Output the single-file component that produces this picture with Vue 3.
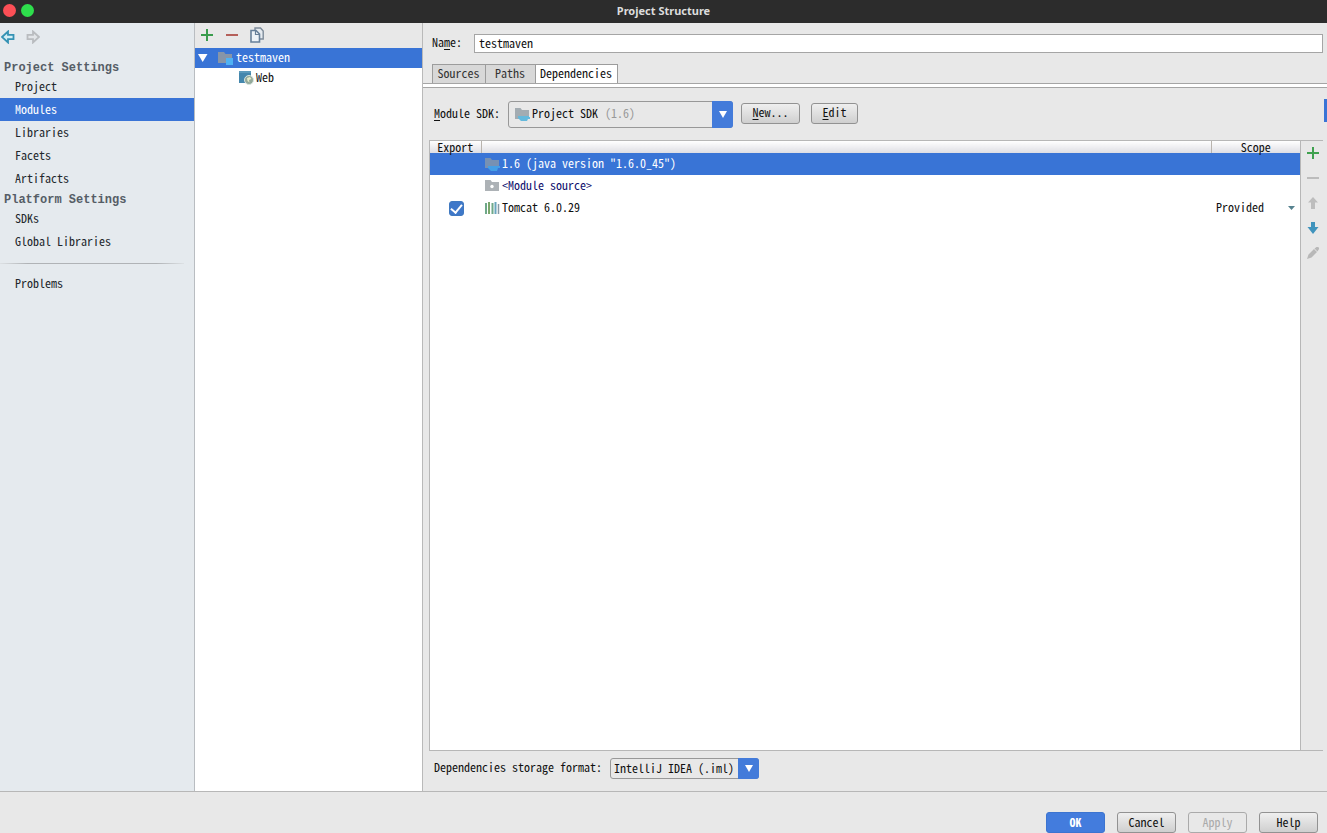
<script setup>
import { ref } from 'vue'

const projectItems = ['Project', 'Modules', 'Libraries', 'Facets', 'Artifacts']
const platformItems = ['SDKs', 'Global Libraries']
const current = ref('Modules')
const moduleName = ref('testmaven')
const exported = ref(true)
</script>

<template>
  <div class="window">
    <header class="titlebar">
      <div class="lights">
        <button class="light red" aria-label="Close"></button>
        <button class="light green" aria-label="Maximize"></button>
      </div>
      <h1>Project Structure</h1>
    </header>

    <div class="body">
      <nav class="sidebar">
        <div class="history">
          <button class="icon-btn" aria-label="Back">
            <svg width="14" height="14" viewBox="0 0 14 14"><path d="M1 7 7 1.500V4.800H12.500V9.200H7V12.500Z" fill="#d3eef5" stroke="#3492b4" stroke-width="1.800" /></svg>
          </button>
          <button class="icon-btn" aria-label="Forward">
            <svg width="14" height="14" viewBox="0 0 14 14"><path d="M13 7 7 1.500V4.800H1.500V9.200H7V12.500Z" fill="#e2e5e8" stroke="#b9bcbf" stroke-width="1.800" /></svg>
          </button>
        </div>
        <h2>Project Settings</h2>
        <a v-for="item in projectItems" :key="item" href="#" class="nav-item" :class="{ active: item === current }" @click.prevent="current = item">{{ item }}</a>
        <h2>Platform Settings</h2>
        <a v-for="item in platformItems" :key="item" href="#" class="nav-item" :class="{ active: item === current }" @click.prevent="current = item">{{ item }}</a>
        <hr />
        <a href="#" class="nav-item" @click.prevent>Problems</a>
      </nav>

      <section class="tree">
        <div class="tree-tools">
          <button class="icon-btn" aria-label="Add">
            <svg width="14" height="14" viewBox="0 0 14 14"><path d="M7 1V13M1 7H13" stroke="#3a9c4c" stroke-width="2" /></svg>
          </button>
          <button class="icon-btn" aria-label="Remove">
            <svg width="14" height="14" viewBox="0 0 14 14"><path d="M1 7H13" stroke="#b5605a" stroke-width="2" /></svg>
          </button>
          <button class="icon-btn" aria-label="Copy">
            <svg width="14" height="16" viewBox="0 0 14 16">
              <path d="M5 3V1H10.500L13.200 4V12H10" fill="#e6ebf0" stroke="#7d8b99" stroke-width="1.400" />
              <path d="M1 3.500H6L9.500 7V15H1Z" fill="#edf3f8" stroke="#67809a" stroke-width="1.600" />
              <path d="M5.500 3.500V7.500H9.500" fill="none" stroke="#67809a" stroke-width="1.200" />
            </svg>
          </button>
        </div>
        <div class="tree-row root">
          <svg class="twisty" width="10" height="8" viewBox="0 0 10 8"><path d="M0 0H9.500L4.700 8Z" fill="#fff" /></svg>
          <svg width="16" height="14" viewBox="0 0 16 14">
            <path d="M0 1H6L7.500 3H14V12H0Z" fill="#8795a8" />
            <path d="M8 7H15V14H8Z" fill="#4fb2f4" />
          </svg>
          <span>testmaven</span>
        </div>
        <div class="tree-row child">
          <svg width="15" height="14" viewBox="0 0 15 14">
            <path d="M0 0H12V12H0Z" fill="#4487ad" />
            <path d="M0 0H12V2H0Z" fill="#5b9abb" />
            <circle cx="10" cy="9" r="4.500" fill="#93a99b" stroke="#d9e5df" />
            <path d="M8 7 11 6 12.500 8 10 9 10.500 11.500 8.500 10Z" fill="#e5ecc9" />
          </svg>
          <span>Web</span>
        </div>
      </section>

      <main class="detail">
        <div class="name-row">
          <label for="module-name">Na<u>m</u>e:</label>
          <input id="module-name" v-model="moduleName" type="text" />
        </div>

        <div class="tabs" role="tablist">
          <button role="tab" class="tab sources">Sources</button>
          <button role="tab" class="tab paths">Paths</button>
          <button role="tab" class="tab selected" aria-selected="true">Dependencies</button>
        </div>
        <div class="tab-rule"></div>

        <div class="sdk-row">
          <label for="sdk"><u>M</u>odule SDK:</label>
          <div class="combo sdk">
            <select id="sdk"><option>Project SDK</option></select>
            <span class="sdk-face">
              <svg width="16" height="15" viewBox="0 0 16 15">
                <path d="M0 1H5.500L7 3H14V12H0Z" fill="#a3acb2" />
                <path d="M3 9H14V10H15V12H13L12 14H6L3 11Z" fill="#65b9dc" />
              </svg>
              <span class="version">(1.6)</span>
            </span>
            <span class="arrow"><svg width="8" height="7" viewBox="0 0 8 7"><path d="M0 0H8L4 7Z" fill="#fff" /></svg></span>
          </div>
          <button class="btn new"><span><u>N</u>ew...</span></button>
          <button class="btn edit"><span><u>E</u>dit</span></button>
        </div>

        <div class="deps">
          <div class="table-wrap">
            <table>
              <colgroup><col class="c-export" /><col /><col class="c-scope" /></colgroup>
              <thead>
                <tr><th scope="col">Export</th><th scope="col" aria-label="Dependency"></th><th scope="col">Scope</th></tr>
              </thead>
              <tbody>
                <tr class="picked">
                  <td></td>
                  <td>
                    <div class="dep">
                      <svg width="15" height="14" viewBox="0 0 15 14">
                        <path d="M0 1H5.500L7 3H14V11H0Z" fill="#7791b3" />
                        <path d="M3 9H15V11H13L12 14H6L3 11Z" fill="#459fe5" />
                      </svg>
                      <span>1.6 (java version "1.6.0_45")</span>
                    </div>
                  </td>
                  <td></td>
                </tr>
                <tr>
                  <td></td>
                  <td>
                    <div class="dep link">
                      <svg width="15" height="14" viewBox="0 0 15 14">
                        <path d="M0 1H5.500L7 3H14V12H0Z" fill="#adb2b6" />
                        <circle cx="7" cy="7.500" r="1.700" fill="#fff" />
                      </svg>
                      <span>&lt;Module source&gt;</span>
                    </div>
                  </td>
                  <td></td>
                </tr>
                <tr>
                  <td class="check"><input v-model="exported" type="checkbox" aria-label="Export Tomcat 6.0.29" /></td>
                  <td>
                    <div class="dep">
                      <svg width="15" height="14" viewBox="0 0 15 14">
                        <path d="M1 2V13M7.500 2V13" stroke="#6fa889" stroke-width="2" />
                        <path d="M4 1V13" stroke="#7aa76c" stroke-width="2" />
                        <path d="M10.500 1V13" stroke="#69a5bd" stroke-width="2" />
                        <path d="M13.500 3V13" stroke="#8799a5" stroke-width="1.500" />
                      </svg>
                      <span>Tomcat 6.0.29</span>
                    </div>
                  </td>
                  <td>
                    <div class="scope">
                      <select aria-label="Scope"><option>Provided</option></select>
                      <svg width="7" height="4" viewBox="0 0 7 4"><path d="M0 0H7L3.500 4Z" fill="#56828f" /></svg>
                    </div>
                  </td>
                </tr>
              </tbody>
            </table>
          </div>
          <div class="side-tools">
            <button class="icon-btn" aria-label="Add dependency">
              <svg width="14" height="14" viewBox="0 0 14 14"><path d="M7 1V13M1 7H13" stroke="#3fa14f" stroke-width="2" /></svg>
            </button>
            <button class="icon-btn" aria-label="Remove dependency" disabled>
              <svg width="14" height="14" viewBox="0 0 14 14"><path d="M1 7H13" stroke="#bcbcbc" stroke-width="2" /></svg>
            </button>
            <button class="icon-btn" aria-label="Move up" disabled>
              <svg width="14" height="14" viewBox="0 0 14 14"><path d="M7 1 12 6.500H9V13H5V6.500H2Z" fill="#bdbdbd" /></svg>
            </button>
            <button class="icon-btn" aria-label="Move down">
              <svg width="14" height="14" viewBox="0 0 14 14"><path d="M5 1H9V6H12.500L7 13 1.500 6H5Z" fill="#4094bd" /></svg>
            </button>
            <button class="icon-btn" aria-label="Edit dependency" disabled>
              <svg width="14" height="14" viewBox="0 0 14 14"><path d="M1 13 2.500 8.500 8 3 11 6 5.500 11.500ZM8.500 2.500 10.500 1Q13.500 .5 13 3L11.500 5.500Z" fill="#b8b8b8" /></svg>
            </button>
          </div>
        </div>

        <div class="format-row">
          <label for="format">Dependencies storage format:</label>
          <div class="combo format">
            <select id="format"><option>IntelliJ IDEA (.iml)</option></select>
            <span class="arrow"><svg width="8" height="7" viewBox="0 0 8 7"><path d="M0 0H8L4 7Z" fill="#fff" /></svg></span>
          </div>
        </div>
        <span class="edge-mark"></span>
      </main>
    </div>

    <footer>
      <button class="btn primary">OK</button>
      <button class="btn">Cancel</button>
      <button class="btn" disabled>Apply</button>
      <button class="btn">Help</button>
    </footer>
  </div>
</template>

<style>
body {
  margin: 0;
}
</style>

<style scoped>
* {
  box-sizing: border-box;
}
.window {
  display: flex;
  flex-direction: column;
  min-height: 100vh;
  background: #e8e8e8;
  color: #111;
}
.window,
button,
input,
select {
  font-family: "Noto Sans CJK SC", "Liberation Mono", monospace;
  font-size: 12px;
  line-height: 16px;
  font-feature-settings: "hwid";
}
button,
select {
  margin: 0;
  padding: 0;
  color: inherit;
}
.titlebar {
  display: grid;
  grid-template-columns: 1fr auto 1fr;
  align-items: center;
  height: 23px;
  background: #2c2c2c;
}
.titlebar h1 {
  margin: 0;
  padding-bottom: 2px;
  color: #dcdcdc;
  font: bold 11px/21px "Noto Sans", sans-serif;
}
.lights {
  display: flex;
  gap: 5px;
  padding: 0 0 3px 3px;
}
.light {
  width: 13px;
  height: 13px;
  border: 0;
  border-radius: 50%;
}
.red {
  background: #fc4f56;
}
.green {
  background: #2ede4c;
}
.body {
  display: flex;
  flex: 1;
}
.icon-btn {
  display: flex;
  align-items: center;
  justify-content: center;
  border: 0;
  background: none;
}
.sidebar {
  flex: 0 0 195px;
  border-right: 1px solid #b9bdc1;
  background: #e5eaee;
}
.history {
  display: flex;
  align-items: center;
  gap: 11px;
  height: 35px;
  padding: 0 0 8px 1px;
}
.sidebar h2 {
  margin: 0;
  padding: 3px 0 0 4px;
  color: #555d66;
  font: bold 12px/14px "Liberation Mono", monospace;
}
.nav-item {
  display: block;
  padding: 0 0 2px 15px;
  color: #22272c;
  line-height: 21px;
  text-decoration: none;
}
.nav-item.active {
  background: #3974d6;
  color: #fff;
}
hr {
  height: 1px;
  margin: 10px 10px 8px 0;
  border: 0;
  background: linear-gradient(90deg, #dde1e4, #b0b3b6 15%, #b0b3b6 85%, #dde1e4);
}
.tree {
  flex: 0 0 228px;
  border-right: 1px solid #b9b9b9;
  background: #fff;
}
.tree-tools {
  display: flex;
  align-items: center;
  gap: 11px;
  height: 25px;
  padding: 0 0 2px 5px;
  background: #e8e8e8;
}
.tree-row {
  display: flex;
  align-items: center;
  height: 20px;
}
.tree-row span,
.dep span {
  padding-bottom: 2px;
}
.root {
  gap: 2px;
  padding-left: 3px;
  background: #3974d6;
  color: #fff;
}
.twisty {
  margin-right: 8px;
}
.child {
  gap: 2px;
  padding-left: 44px;
}
.detail {
  position: relative;
  display: flex;
  flex: 1;
  flex-direction: column;
  min-width: 0;
}
.name-row {
  display: flex;
  align-items: center;
  gap: 12px;
  padding: 11px 4px 11px 9px;
}
label {
  padding-bottom: 3px;
}
.name-row input {
  flex: 1;
  min-width: 0;
  height: 19px;
  padding: 0 4px 2px;
  border: 1px solid #a5a5a5;
  background: #fff;
  color: #111;
}
u {
  text-underline-offset: 2px;
}
.tabs {
  display: flex;
  padding-left: 9px;
}
.tab {
  height: 19px;
  padding: 0 5px 2px 4px;
  border: 1px solid #9c9c9c;
  border-width: 1px 0 0 1px;
  background: #d8d8d8;
  color: #333;
}
.tab.sources {
  width: 53px;
}
.tab.paths {
  width: 50px;
}
.tab.selected {
  width: 83px;
  border-right-width: 1px;
  background: #fff;
  color: #111;
}
.tab-rule {
  height: 5px;
  border: 1px solid #a5a5a5;
  border-width: 1px 0;
  background: #fff;
}
.sdk-row {
  display: flex;
  align-items: center;
  height: 52px;
  padding-left: 11px;
}
.combo {
  display: grid;
  grid-template-columns: 1fr 19px;
  border: 1px solid #989898;
  border-radius: 3px;
}
.combo select {
  grid-area: 1 / 1 / 2 / 3;
  padding-bottom: 2px;
  appearance: none;
  border: 0;
  background: none;
}
.combo .arrow {
  display: flex;
  grid-area: 1 / 2;
  align-items: center;
  justify-content: center;
  margin: -1px;
  border-radius: 0 3px 3px 0;
  background: #437bda;
  pointer-events: none;
}
.combo.sdk {
  width: 225px;
  height: 27px;
  margin: 0 8px;
}
.combo.sdk select {
  padding-left: 23px;
}
.sdk-face {
  display: flex;
  grid-area: 1 / 1;
  align-items: center;
  justify-content: space-between;
  width: 126px;
  padding-left: 6px;
  pointer-events: none;
}
.version {
  padding-bottom: 2px;
  color: #999;
}
.btn {
  width: 59px;
  height: 21px;
  padding-bottom: 2px;
  border: 1px solid #929292;
  border-radius: 3px;
  background: linear-gradient(#efefef, #cfcfcf);
}
.new,
.edit {
  margin-bottom: 2px;
}
.edit {
  width: 47px;
  margin-left: 11px;
}
.btn:disabled {
  border-color: #aaa;
  background: #e8e8e8;
  color: #aaa;
}
.btn.primary {
  border-color: #3c74d0;
  background: #437cdd;
  color: #fff;
  font-weight: bold;
}
.deps {
  display: flex;
  flex: 1;
  margin: 0 4px 0 6px;
  border: 1px solid #b7b7b7;
  border-right: 0;
}
.table-wrap {
  flex: 1;
  border-right: 1px solid #b7b7b7;
  background: #fff;
}
table {
  width: 100%;
  border-collapse: collapse;
  table-layout: fixed;
}
.c-export {
  width: 51px;
}
.c-scope {
  width: 89px;
}
th,
td {
  padding: 0;
}
th {
  height: 12px;
  border-right: 1px solid #b9b4ae;
  background: linear-gradient(#fff, #dedee4);
  font-weight: normal;
  line-height: 12px;
}
th:last-child {
  border-right: 0;
}
td {
  height: 22px;
}
.picked {
  background: #3974d6;
  color: #fff;
}
.dep {
  display: flex;
  align-items: center;
  gap: 2px;
  padding-left: 4px;
}
.link {
  color: #10106e;
}
.check {
  vertical-align: middle;
  text-align: center;
}
.check input {
  display: flex;
  align-items: center;
  justify-content: center;
  appearance: none;
  width: 15px;
  height: 15px;
  margin: 0 0 0 19px;
  border: 1px solid #4079c0;
  border-radius: 3px;
  background: #fff;
}
.check input:checked {
  background: #3f78c9;
}
.check input:checked::after {
  content: "";
  width: 5px;
  height: 9px;
  margin-bottom: 2px;
  border: solid #fff;
  border-width: 0 2px 2px 0;
  transform: rotate(40deg);
}
.scope {
  display: flex;
  align-items: center;
  justify-content: space-between;
  padding: 0 5px;
}
.scope select {
  padding-bottom: 2px;
  appearance: none;
  border: 0;
  background: none;
}
.side-tools {
  display: flex;
  flex: 0 0 22px;
  flex-direction: column;
  align-items: center;
  padding-left: 2px;
}
.side-tools .icon-btn {
  height: 25px;
  padding-bottom: 2px;
}
.format-row {
  display: flex;
  align-items: center;
  gap: 8px;
  height: 40px;
  padding: 0 0 5px 11px;
}
.combo.format {
  width: 149px;
  height: 21px;
}
.combo.format select {
  padding-left: 3px;
}
.edge-mark {
  position: absolute;
  top: 76px;
  right: 0;
  width: 3px;
  height: 23px;
  background: #3974d6;
}
footer {
  display: flex;
  justify-content: flex-end;
  gap: 12px;
  padding: 20px 9px 0 0;
  border-top: 1px solid #b7b7b7;
}
</style>
